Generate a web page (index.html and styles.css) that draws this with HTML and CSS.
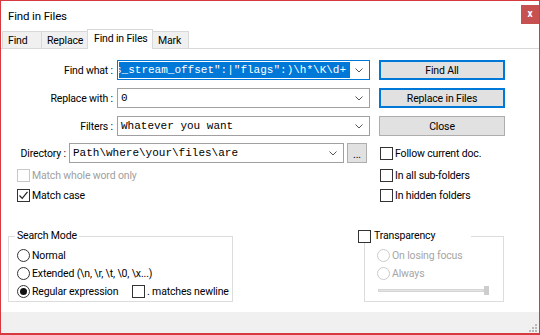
FILE: index.html
```html
<!DOCTYPE html>
<html lang="en">
<head>
    <meta charset="UTF-8">
    <title>Find in Files</title>
    <link rel="stylesheet" href="styles.css">
</head>
<body>
    <div class="dialog">
        <div class="titlebar">
            <span class="title">Find in Files</span>
            <span class="close">x</span>
        </div>
        <div class="tabs">
            <div class="tab tab-find">Find</div>
            <div class="tab tab-replace">Replace</div>
            <div class="tab tab-files active">Find in Files</div>
            <div class="tab tab-mark">Mark</div>
        </div>
        <div class="page">
            <div class="row">
                <span class="label">Find what :</span>
                <div class="combo focused">
                    <span class="selection">s_stream_offset":|"flags":)\h*\K\d+</span>
                    <svg class="chevron" width="8" height="5" viewBox="0 0 8 5"><path d="M0.5 0.5 L4 4 L7.5 0.5"/></svg>
                </div>
                <div class="button default">Find All</div>
            </div>
            <div class="row">
                <span class="label">Replace with :</span>
                <div class="combo">
                    <span class="value">0</span>
                    <svg class="chevron" width="8" height="5" viewBox="0 0 8 5"><path d="M0.5 0.5 L4 4 L7.5 0.5"/></svg>
                </div>
                <div class="button default">Replace in Files</div>
            </div>
            <div class="row row-filters">
                <span class="label">Filters :</span>
                <div class="combo">
                    <span class="value">Whatever you want</span>
                    <svg class="chevron" width="8" height="5" viewBox="0 0 8 5"><path d="M0.5 0.5 L4 4 L7.5 0.5"/></svg>
                </div>
                <div class="button">Close</div>
            </div>
            <div class="row row-dir">
                <span class="label label-dir">Directory :</span>
                <div class="combo combo-dir">
                    <span class="value">Path\where\your\files\are</span>
                    <svg class="chevron" width="8" height="5" viewBox="0 0 8 5"><path d="M0.5 0.5 L4 4 L7.5 0.5"/></svg>
                </div>
                <div class="button browse">...</div>
                <label class="check follow"><span class="box"></span>Follow current doc.</label>
            </div>

            <div class="options">
                <div class="options-left">
                    <label class="check disabled"><span class="box"></span>Match whole word only</label>
                    <label class="check"><span class="box"><svg width="11" height="11" viewBox="0 0 11 11"><path d="M1.5 5.5 L4.2 8.3 L9.5 1.8"/></svg></span>Match case</label>
                </div>
                <div class="options-right">
                    <label class="check"><span class="box"></span>In all sub-folders</label>
                    <label class="check"><span class="box"></span>In hidden folders</label>
                </div>
            </div>

            <div class="groups">
                <div class="group search-mode">
                    <div class="group-title">Search Mode</div>
                    <label class="radio"><span class="dot"></span>Normal</label>
                    <label class="radio"><span class="dot"></span>Extended (\n, \r, \t, \0, \x...)</label>
                    <div class="radio-line">
                        <label class="radio regex"><span class="dot checked"></span>Regular expression</label>
                        <label class="check"><span class="box"></span>. matches newline</label>
                    </div>
                </div>
                <div class="group transparency">
                    <div class="group-title title-check"><label class="check"><span class="box"></span>Transparency</label></div>
                    <label class="radio disabled"><span class="dot"></span>On losing focus</label>
                    <label class="radio disabled"><span class="dot"></span>Always</label>
                    <div class="slider">
                        <span class="track"></span>
                        <span class="thumb"></span>
                    </div>
                </div>
            </div>
        </div>
        <div class="footer">
            <svg class="grip" width="9" height="9" viewBox="0 0 9 9">
                <rect x="7" y="1" width="2" height="2"/>
                <rect x="4" y="4" width="2" height="2"/>
                <rect x="7" y="4" width="2" height="2"/>
                <rect x="1" y="7" width="2" height="2"/>
                <rect x="4" y="7" width="2" height="2"/>
                <rect x="7" y="7" width="2" height="2"/>
            </svg>
        </div>
    </div>
</body>
</html>
```

FILE: styles.css
```css
* {
    box-sizing: border-box;
}

body {
    margin: 0;
    background-color: #fff;
    color: #000;
    font-family: Roboto, "Liberation Sans", sans-serif;
    font-size: 10.5px;
    letter-spacing: -0.15px;
}

.dialog {
    width: 540px;
    height: 335px;
    border: 1px solid #d8393f;
    border-bottom-width: 2px;
    display: flex;
    flex-direction: column;
    background-color: #fff;
}

/* title bar */

.titlebar {
    flex: none;
    height: 28px;
    display: flex;
    justify-content: space-between;
    align-items: flex-start;
    padding-left: 7px;
}

.title {
    font-size: 11.5px;
    margin-top: 8px;
}

.close {
    width: 18px;
    height: 19px;
    margin-top: 4px;
    background-color: #c75050;
    color: #fff;
    font-size: 10px;
    font-weight: bold;
    display: flex;
    justify-content: center;
    align-items: center;
    padding-bottom: 2px;
}

/* tabs */

.tabs {
    flex: none;
    height: 19px;
    display: flex;
    align-items: flex-end;
    padding-left: 1px;
}

.tab {
    height: 17px;
    border: 1px solid #d9d9d9;
    border-bottom: none;
    background-color: #f0f0f0;
    padding: 2px 0 0 5px;
    line-height: 14px;
    margin-right: -1px;
    white-space: nowrap;
}

.tab-find { width: 40px; }
.tab-replace { width: 47px; }
.tab-mark { width: 37px; }

.tab.active {
    width: 66px;
    height: 20px;
    background-color: #fff;
    margin-bottom: -1px;
    padding: 2px 0 0 6px;
    position: relative;
    z-index: 1;
}

/* page */

.page {
    flex: none;
    height: 264px;
    border-top: 1px solid #d9d9d9;
    padding-top: 11px;
    display: flex;
    flex-direction: column;
}

.row {
    display: flex;
    align-items: center;
    height: 20px;
    margin-bottom: 8px;
}

.row-filters {
    margin-bottom: 7px;
}

.row-dir {
    margin-bottom: 2px;
}

.label {
    width: 116px;
    text-align: right;
    padding-right: 4px;
}

.label-dir {
    width: 68px;
    padding-right: 3px;
}

.combo {
    width: 253px;
    height: 20px;
    border: 1px solid #a0a0a0;
    display: flex;
    align-items: center;
    overflow: hidden;
    font-family: "Liberation Mono", monospace;
    font-size: 11px;
    letter-spacing: 0;
}

.combo.focused {
    border-color: #0078d7;
}

.combo-dir {
    width: 275px;
}

.value {
    padding-left: 3px;
    white-space: pre;
}

.selection {
    width: 231px;
    height: 16px;
    margin-left: 1px;
    background-color: #0078d7;
    color: #fff;
    white-space: pre;
    overflow: hidden;
    text-indent: -4px;
    line-height: 16px;
}

.chevron {
    margin-left: auto;
    margin-right: 6px;
    flex: none;
}

.chevron path {
    fill: none;
    stroke: #555;
    stroke-width: 1;
}

.button {
    width: 126px;
    height: 20px;
    margin-left: 9px;
    border: 1px solid #adadad;
    background-color: #e1e1e1;
    display: flex;
    justify-content: center;
    align-items: center;
    white-space: nowrap;
}

.button.default {
    border: 2px solid #0078d7;
}

.button.browse {
    width: 20px;
    margin-left: 3px;
    align-items: flex-end;
    padding-bottom: 3px;
    line-height: 8px;
}

/* checkboxes and radios */

.check, .radio {
    display: flex;
    align-items: center;
    gap: 2px;
    height: 20px;
    white-space: nowrap;
}

.box {
    width: 13px;
    height: 13px;
    border: 1px solid #333;
    background-color: #fff;
    flex: none;
    display: flex;
    justify-content: center;
    align-items: center;
}

.box path {
    fill: none;
    stroke: #222;
    stroke-width: 1.2;
}

.check.disabled {
    color: #a0a0a0;
}

.check.disabled .box {
    border-color: #c8c8c8;
}

.follow {
    margin-left: 13px;
}

.options {
    display: flex;
}

.options-left {
    width: 379px;
    padding-left: 16px;
}

/* group boxes */

.groups {
    display: flex;
    margin-top: 31px;
}

.group {
    height: 66px;
    border: 1px solid #dcdcdc;
}

.search-mode {
    width: 225px;
    margin-left: 7px;
    padding-left: 8px;
}

.transparency {
    width: 140px;
    margin-left: 131px;
    padding-left: 12px;
}

.group-title {
    height: 14px;
    line-height: 14px;
    margin: -8px 0 3px -2px;
    padding: 0 2px;
    background-color: #fff;
    width: fit-content;
}

.title-check {
    width: 113px;
    margin-left: -19px;
    padding: 0;
}

.title-check .check {
    height: 14px;
    gap: 3px;
}

.group .radio {
    height: 18px;
}

.dot {
    width: 13px;
    height: 13px;
    border: 1px solid #333;
    border-radius: 50%;
    flex: none;
    display: flex;
    justify-content: center;
    align-items: center;
}

.dot.checked::after {
    content: "";
    width: 7px;
    height: 7px;
    border-radius: 50%;
    background-color: #111;
}

.radio.disabled {
    color: #a6a6a6;
}

.radio.disabled .dot {
    border-color: #cccccc;
}

.radio-line {
    display: flex;
    align-items: center;
    height: 18px;
}

.radio.regex {
    width: 115px;
}

.slider {
    display: flex;
    align-items: center;
    width: 111px;
    height: 9px;
    margin: 4px 0 0 1px;
}

.track {
    flex: 1;
    height: 3px;
    background-color: #e3e3e3;
    border: 1px solid #d6d6d6;
}

.thumb {
    width: 5px;
    height: 9px;
    background-color: #cdcdcd;
}

/* footer */

.footer {
    flex: 1;
    background-color: #f0f0f0;
    display: flex;
    justify-content: flex-end;
    align-items: flex-end;
    padding: 0 2px 1px 0;
}

.grip rect {
    fill: #b8b8b8;
}
```
